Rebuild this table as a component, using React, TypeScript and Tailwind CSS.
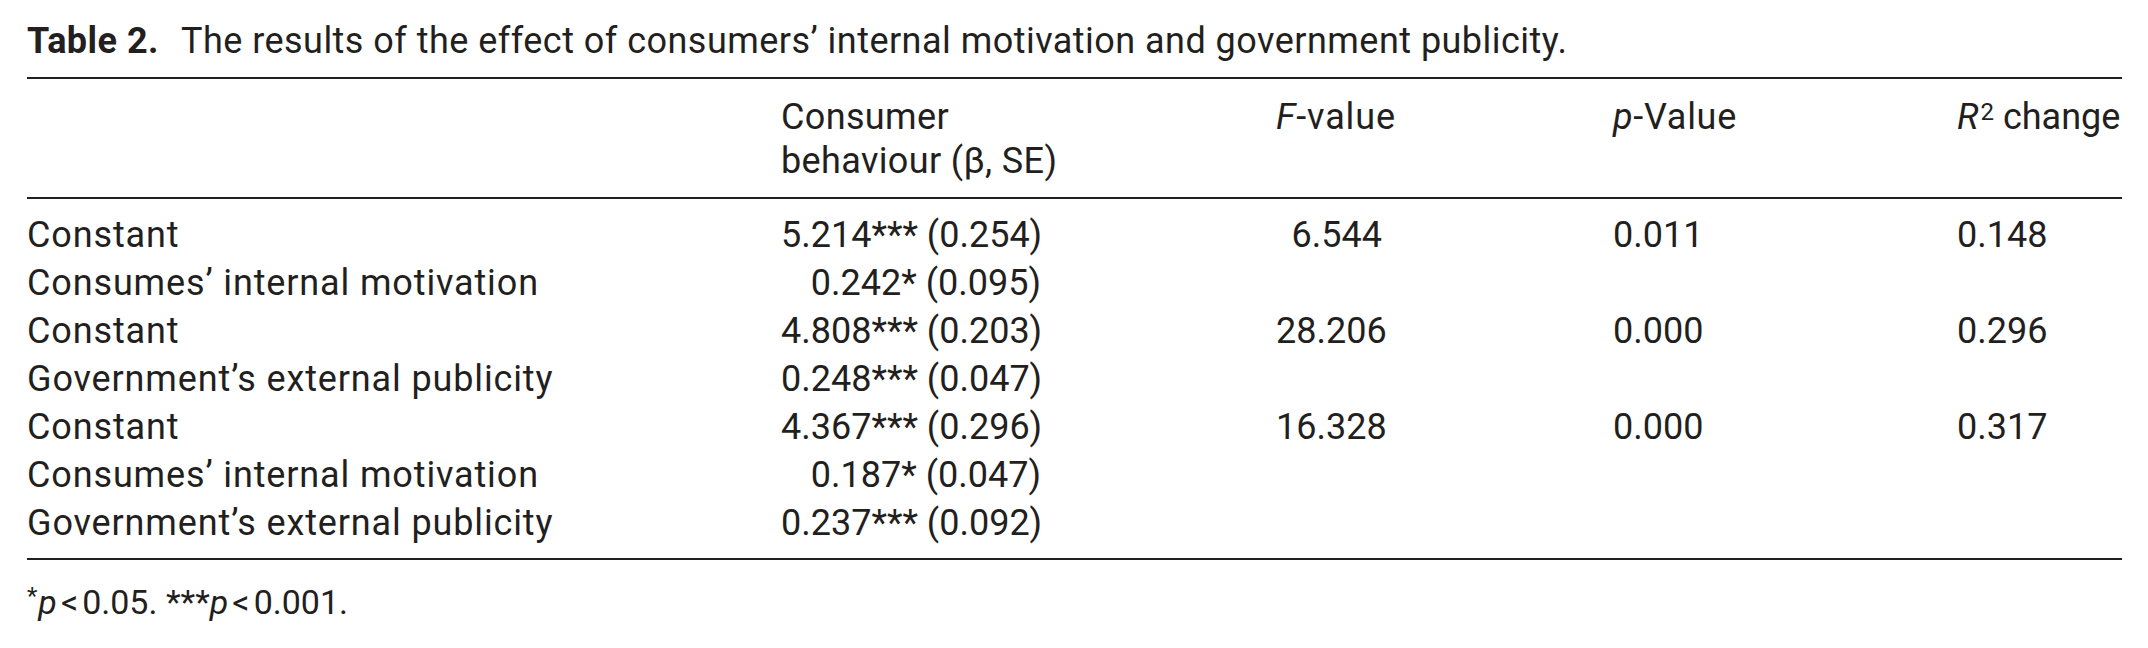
import React from "react";

type Row = { label: string; beta: string; f?: string; p?: string; r2?: string };

const rows: Row[] = [
  { label: "Constant", beta: "5.214*** (0.254)", f: "6.544", p: "0.011", r2: "0.148" },
  { label: "Consumes\u2019 internal motivation", beta: "0.242* (0.095)" },
  { label: "Constant", beta: "4.808*** (0.203)", f: "28.206", p: "0.000", r2: "0.296" },
  { label: "Government\u2019s external publicity", beta: "0.248*** (0.047)" },
  { label: "Constant", beta: "4.367*** (0.296)", f: "16.328", p: "0.000", r2: "0.317" },
  { label: "Consumes\u2019 internal motivation", beta: "0.187* (0.047)" },
  { label: "Government\u2019s external publicity", beta: "0.237*** (0.092)" },
];

const grid = "grid grid-cols-[754px_495px_337px_344px_1fr]";

export default function App() {
  return (
    <div
      className="w-[2148px] h-[648px] bg-white text-[#231f20] pl-[27px] pr-[26px] pt-[17px] text-[36px]"
      style={{ fontFamily: "Roboto, 'Noto Sans', sans-serif" }}
    >
      <div className="leading-[48px] whitespace-nowrap tracking-[0.013em]">
        <span className="font-bold">Table 2.</span>
        <span className="ml-[22px]">
          The results of the effect of consumers’ internal motivation and government publicity.
        </span>
      </div>
      <div className="mt-[12px] border-t-2 border-[#231f20]" />
      <div className={`${grid} pt-[16px] pb-[14px] leading-[44px]`}>
        <div />
        <div className="tracking-[0.01em]">
          <div>Consumer</div>
          <div>behaviour (β, SE)</div>
        </div>
        <div className="tracking-[0.025em]">
          <span className="italic">F</span>-value
        </div>
        <div className="tracking-[0.02em]">
          <span className="italic">p</span>-Value
        </div>
        <div>
          <span className="italic">R</span>
          <sup className="text-[24px] -top-[9px] ml-[2px]">2</sup> change
        </div>
      </div>
      <div className="border-t-2 border-[#231f20]" />
      <div className="pt-[12px] pb-[11px] leading-[48px]">
        {rows.map((r, i) => (
          <div key={i} className={grid}>
            <div className="whitespace-nowrap tracking-[0.024em]">{r.label}</div>
            <div className="w-[260px] text-right whitespace-nowrap">{r.beta}</div>
            <div className="w-[106px] text-right">{r.f ?? ""}</div>
            <div>{r.p ?? ""}</div>
            <div>{r.r2 ?? ""}</div>
          </div>
        ))}
      </div>
      <div className="border-t-2 border-[#231f20]" />
      <div className="pt-[18px] leading-[48px] whitespace-nowrap text-[34px]">
        <sup className="text-[24px] -top-[10px] mr-[1px]">*</sup>
        <span className="italic">p</span>
        <span className="mx-[4px]">&lt;</span>0.05.{" "}
        <span>***</span>
        <span className="italic">p</span>
        <span className="mx-[4px]">&lt;</span>0.001.
      </div>
    </div>
  );
}
